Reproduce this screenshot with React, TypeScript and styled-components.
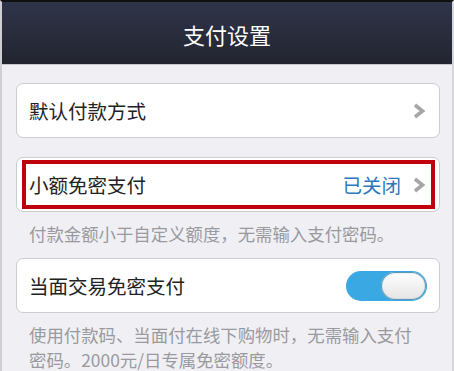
import styled, { createGlobalStyle } from 'styled-components'

const GlobalStyle = createGlobalStyle`
  html, body {
    margin: 0;
    padding: 0;
    background: #efeff4;
  }
  body {
    font-family: "Noto Sans CJK SC", "Noto Sans", sans-serif;
  }
`

const Frame = styled.div`
  width: 454px;
  height: 371px;
  box-sizing: border-box;
  border-top: 2px solid #111;
  border-left: 2px solid #cfcfd3;
  border-right: 2px solid #d6d6da;
  background: #efeff4;
  overflow: hidden;
`

const Header = styled.header`
  height: 62px;
  display: flex;
  align-items: center;
  justify-content: center;
  background: linear-gradient(#30344a, #22252f);
  border-bottom: 1px solid #c9c9cd;
`

const Title = styled.h1`
  margin: 0;
  font-size: 22px;
  font-weight: 400;
  color: #fff;
  padding-top: 2px;
`

const Content = styled.main`
  display: flex;
  flex-direction: column;
  padding: 18px 12px 0 14px;
`

const Card = styled.div<{ $mt?: number; $framed?: boolean }>`
  box-sizing: border-box;
  height: 55px;
  margin-top: ${(p) => p.$mt ?? 0}px;
  background: #fff;
  border: 1px solid #cdcdd1;
  border-radius: 7px;
  padding: ${(p) => (p.$framed ? '2px 4px 2px 5px' : '0 13px 0 12px')};
  display: flex;
`

const Row = styled.div<{ $framed?: boolean }>`
  flex: 1;
  display: flex;
  align-items: center;
  gap: 11px;
  ${(p) =>
    p.$framed &&
    `
    border: 4px solid #c0000b;
    padding: 0 5px 0 3px;
  `}
`

const Label = styled.span`
  flex: 1;
  font-size: 19.5px;
  color: #222;
  white-space: nowrap;
`

const Status = styled.span`
  font-size: 19.5px;
  color: #2b78bd;
`

const Note = styled.p<{ $pb?: number }>`
  margin: 0;
  padding: 9px 0 ${(p) => p.$pb ?? 0}px 13px;
  font-size: 17.4px;
  line-height: 25px;
  color: #9a9a9e;
  white-space: nowrap;
`

const Toggle = styled.div`
  position: relative;
  width: 81px;
  height: 30px;
  border-radius: 15px;
  background: #3aa8e2;
  margin-right: -1px;
`

const Knob = styled.div`
  position: absolute;
  right: 1px;
  top: 1px;
  width: 45px;
  height: 28px;
  border-radius: 14px;
  background: linear-gradient(#ffffff, #e4e4e4);
  box-shadow: 0 0 1px 1px #4a8fb5 inset;
`

function Chevron() {
  return (
    <svg width="14" height="16" viewBox="0 0 14 16">
      <path d="M3 2 L10.5 8 L3 14" fill="none" stroke="#a6a6a8" strokeWidth="3.6" />
    </svg>
  )
}

export default function App() {
  return (
    <>
      <GlobalStyle />
      <Frame>
        <Header>
          <Title>支付设置</Title>
        </Header>
        <Content>
          <Card>
            <Row>
              <Label>默认付款方式</Label>
              <Chevron />
            </Row>
          </Card>
          <Card $mt={19} $framed>
            <Row $framed>
              <Label>小额免密支付</Label>
              <Status>已关闭</Status>
              <Chevron />
            </Row>
          </Card>
          <Note $pb={12}>付款金额小于自定义额度，无需输入支付密码。</Note>
          <Card>
            <Row>
              <Label>当面交易免密支付</Label>
              <Toggle>
                <Knob />
              </Toggle>
            </Row>
          </Card>
          <Note>
            使用付款码、当面付在线下购物时，无需输入支付
            <br />
            密码。2000元/日专属免密额度。
          </Note>
        </Content>
      </Frame>
    </>
  )
}
